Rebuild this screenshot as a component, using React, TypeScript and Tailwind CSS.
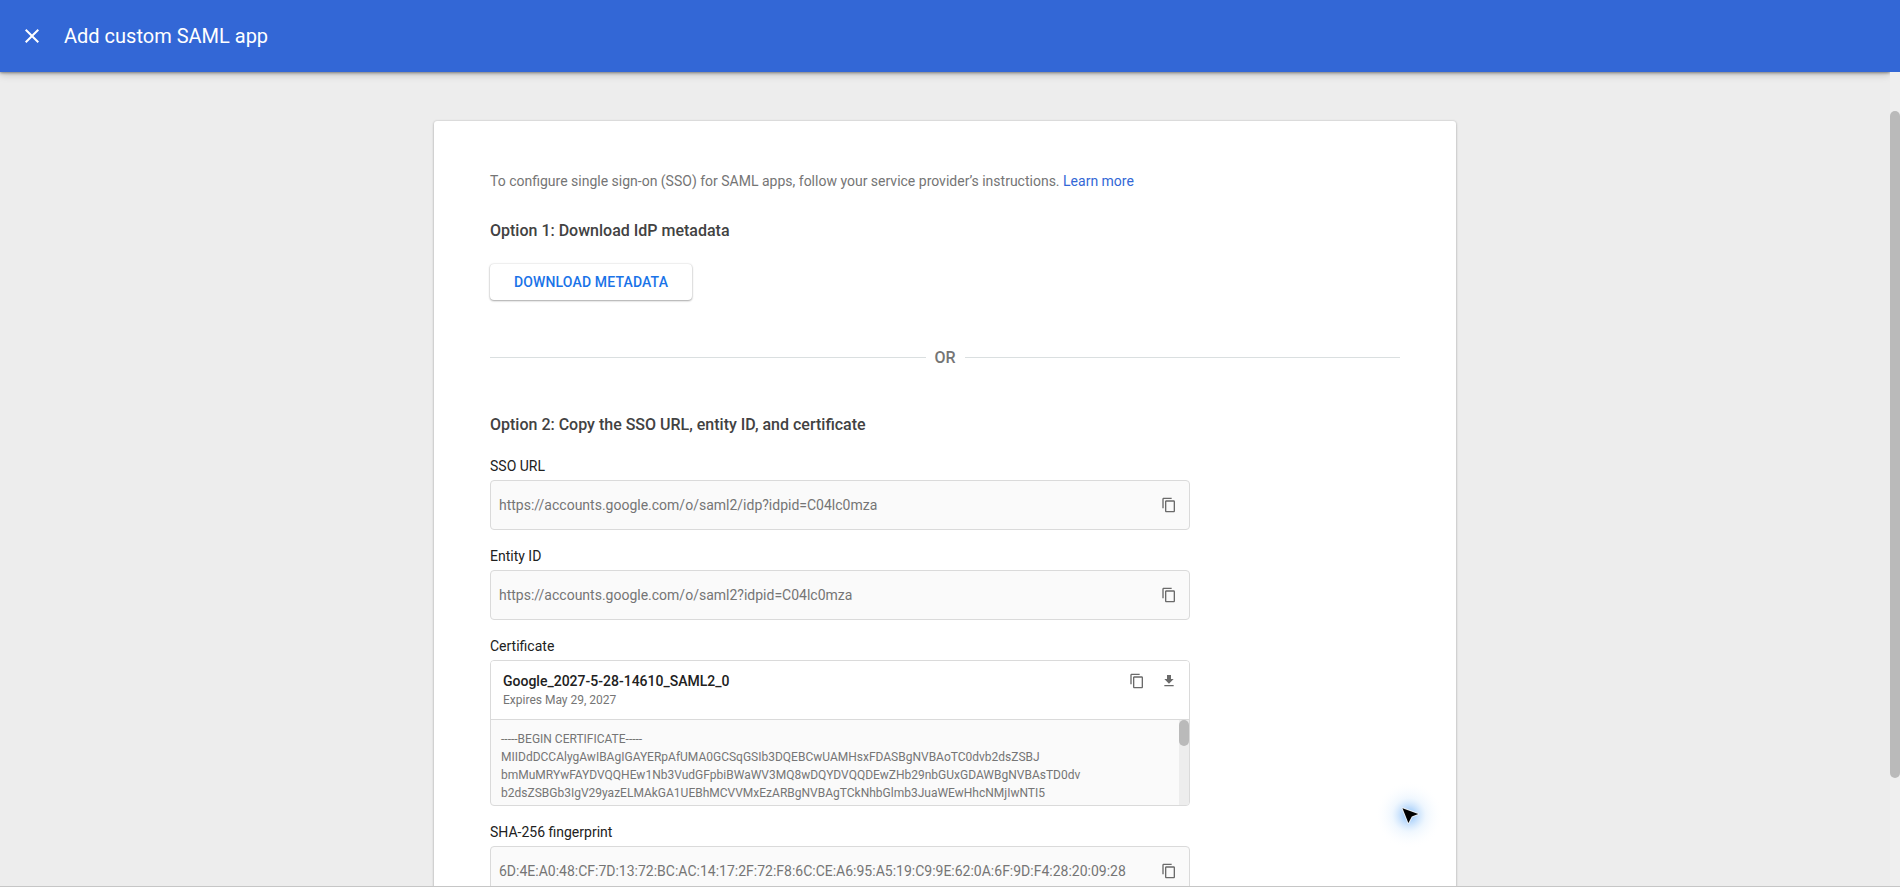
import React from "react";

const CopyIcon = () => (
  <svg width="16" height="16" viewBox="0 0 24 24" fill="#6a6a6a" className="shrink-0">
    <path d="M16 1H4c-1.1 0-2 .9-2 2v14h2V3h12V1zm3 4H8c-1.1 0-2 .9-2 2v14c0 1.1.9 2 2 2h11c1.1 0 2-.9 2-2V7c0-1.1-.9-2-2-2zm0 16H8V7h11v14z" />
  </svg>
);

const DownloadIcon = () => (
  <svg width="16" height="16" viewBox="0 0 24 24" fill="#6a6a6a" className="shrink-0">
    <path d="M19 9h-4V3H9v6H5l7 7 7-7zM5 18v2h14v-2H5z" />
  </svg>
);

const certificateLines = [
  "-----BEGIN CERTIFICATE-----",
  "MIIDdDCCAlygAwIBAgIGAYERpAfUMA0GCSqGSIb3DQEBCwUAMHsxFDASBgNVBAoTC0dvb2dsZSBJ",
  "bmMuMRYwFAYDVQQHEw1Nb3VudGFpbiBWaWV3MQ8wDQYDVQQDEwZHb29nbGUxGDAWBgNVBAsTD0dv",
  "b2dsZSBGb3IgV29yazELMAkGA1UEBhMCVVMxEzARBgNVBAgTCkNhbGlmb3JuaWEwHhcNMjIwNTI5",
];

function Label({ children }: { children: React.ReactNode }) {
  return <div className="mb-1 text-sm leading-5 text-[#212121]">{children}</div>;
}

function Field({ label, value }: { label: string; value: string }) {
  return (
    <div>
      <Label>{label}</Label>
      <div className="flex h-[50px] items-center justify-between rounded border border-[#dadada] bg-[#fafafa] pr-3 pl-2">
        <span className="text-sm leading-5 text-[#757575]">{value}</span>
        <CopyIcon />
      </div>
    </div>
  );
}

function Certificate() {
  return (
    <div>
      <Label>Certificate</Label>
      <div className="h-[146px] overflow-hidden rounded border border-[#dadada] bg-[#fafafa]">
        <div className="flex h-[59px] items-start justify-between border-b border-[#dadada] bg-white pt-2.5 pr-3 pl-3">
          <div>
            <div className="text-sm leading-5 font-medium text-[#212121]">Google_2027-5-28-14610_SAML2_0</div>
            <div className="mt-px text-xs leading-4 text-[#757575]">Expires May 29, 2027</div>
          </div>
          <div className="flex gap-4 pt-0.5">
            <CopyIcon />
            <DownloadIcon />
          </div>
        </div>
        <div className="flex h-[85px] justify-between pl-2.5">
          <div className="pt-2.5 text-xs leading-[18px] text-[#757575]">
            {certificateLines.map((line) => (
              <div key={line}>{line}</div>
            ))}
          </div>
          <div className="w-2.5 bg-[#ededed]">
            <div className="h-[26px] rounded-full bg-[#bababa]" />
          </div>
        </div>
      </div>
    </div>
  );
}

export default function App() {
  return (
    <div className="relative flex h-[887px] flex-col overflow-hidden border-b border-[#c6c6c6] bg-[#ededed] font-[Roboto,sans-serif]">
      <header className="flex h-[72px] shrink-0 items-center bg-[#3367d6] text-white">
        <svg width="24" height="24" viewBox="0 0 24 24" fill="white" className="ml-5">
          <path d="M19 6.41L17.59 5 12 10.59 6.41 5 5 6.41 10.59 12 5 17.59 6.41 19 12 13.41 17.59 19 19 17.59 13.41 12z" />
        </svg>
        <h1 className="ml-5 text-xl">Add custom SAML app</h1>
      </header>
      <div className="flex min-h-0 flex-1">
        <main className="relative flex min-w-0 flex-1 justify-center overflow-hidden">
          <div className="absolute inset-x-0 -top-2 h-2 shadow-[0_1px_3px_rgba(0,0,0,0.4),0_2px_8px_rgba(0,0,0,0.22)]" />
          <section className="mt-[49px] h-[900px] w-[1022px] shrink-0 rounded-[3px] bg-white px-14 pt-[50px] shadow-[0_0_2px_rgba(0,0,0,0.18),0_1px_3px_rgba(0,0,0,0.2)]">
            <p className="text-sm leading-5 text-[#757575]">
              To configure single sign-on (SSO) for SAML apps, follow your service provider’s instructions.{" "}
              <a className="text-[#3367d6]">Learn more</a>
            </p>
            <h2 className="mt-7 text-base leading-6 font-medium text-[#424242]">Option 1: Download IdP metadata</h2>
            <button className="mt-[21px] block h-9 w-[202px] rounded bg-white text-sm font-medium tracking-[0.15px] whitespace-nowrap text-[#1a73e8] shadow-[0_1px_2px_rgba(0,0,0,0.3),0_0_2px_rgba(0,0,0,0.18)]">
              DOWNLOAD METADATA
            </button>
            <div className="mt-[46px] flex w-[910px] items-center">
              <div className="h-px flex-1 bg-[#dadfe0]" />
              <span className="w-[39px] text-center text-base leading-[23px] font-medium text-[#757575]">OR</span>
              <div className="h-px flex-1 bg-[#dadfe0]" />
            </div>
            <h2 className="mt-11 text-base leading-6 font-medium text-[#424242]">
              Option 2: Copy the SSO URL, entity ID, and certificate
            </h2>
            <div className="mt-[19px] flex w-[700px] flex-col gap-4">
              <Field label="SSO URL" value="https://accounts.google.com/o/saml2/idp?idpid=C04lc0mza" />
              <Field label="Entity ID" value="https://accounts.google.com/o/saml2?idpid=C04lc0mza" />
              <Certificate />
              <Field
                label="SHA-256 fingerprint"
                value="6D:4E:A0:48:CF:7D:13:72:BC:AC:14:17:2F:72:F8:6C:CE:A6:95:A5:19:C9:9E:62:0A:6F:9D:F4:28:20:09:28"
              />
            </div>
          </section>
        </main>
        <div className="w-2.5 bg-[#efefef] pt-[39px]">
          <div className="h-[667px] rounded-full bg-[#bababa]" />
        </div>
      </div>
      <svg width="72" height="72" viewBox="0 0 72 72" className="absolute top-[778px] left-[1373px]">
        <defs>
          <radialGradient id="glow">
            <stop offset="0" stopColor="#7db9f7" stopOpacity="0.95" />
            <stop offset="0.25" stopColor="#9fcbfa" stopOpacity="0.6" />
            <stop offset="0.5" stopColor="#d4e9fd" stopOpacity="0.35" />
            <stop offset="1" stopColor="#ffffff" stopOpacity="0" />
          </radialGradient>
        </defs>
        <circle cx="36" cy="37" r="34" fill="url(#glow)" />
        <path d="M29.5 30.3L45.2 36L38.8 38.6L35.4 45Z" fill="#000" stroke="#e8eef4" strokeWidth="2" strokeLinejoin="round" paintOrder="stroke" />
      </svg>
    </div>
  );
}
